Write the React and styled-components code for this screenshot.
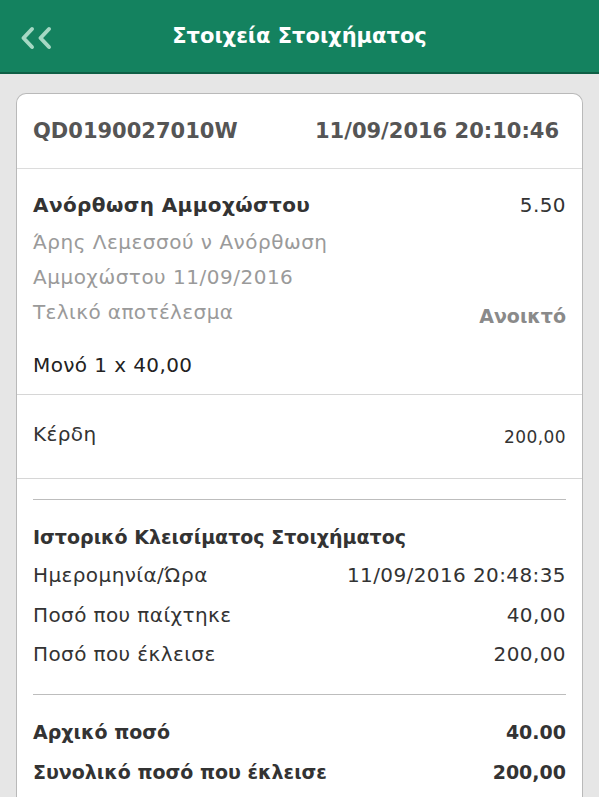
import React from "react";
import styled, { createGlobalStyle } from "styled-components";

const GlobalStyle = createGlobalStyle`
  body {
    margin: 0;
    background: #e6e6e6;
    font-family: "DejaVu Sans", Roboto, "Noto Sans", sans-serif;
  }
`;

const Page = styled.div`
  min-height: 797px;
  background: #e6e6e6;
  overflow: hidden;
`;

const TopBar = styled.header`
  height: 72px;
  background: #14825f;
  border-bottom: 2px solid #0e5f45;
  display: flex;
  align-items: center;
  position: relative;
  justify-content: center;
`;

const BackButton = styled.button`
  position: absolute;
  left: 20px;
  top: 26px;
  width: 32px;
  height: 24px;
  padding: 0;
  border: none;
  background: transparent;
  display: flex;
`;

const Title = styled.h1`
  margin: 0;
  color: #fff;
  font-size: 21px;
  font-weight: 700;
`;

const Card = styled.section`
  margin: 19px 16px 0;
  background: #fff;
  border: 1px solid #b9b9b9;
  border-bottom: none;
  border-radius: 10px 10px 0 0;
`;

const TicketRow = styled.div`
  height: 74px;
  display: flex;
  align-items: center;
  justify-content: space-between;
  padding: 0 23px 0 16px;
  font-size: 21px;
  font-weight: 700;
  color: #555;
  border-bottom: 1px solid #dcdcdc;
`;

const Section = styled.div`
  padding: ${(p) => p.$pad};
  border-bottom: ${(p) => (p.$line ? "1px solid #d6d6d6" : "none")};
`;

const Row = styled.div`
  display: flex;
  justify-content: space-between;
  align-items: ${(p) => p.$align || "center"};
  line-height: ${(p) => p.$lh || 36}px;
  margin-top: ${(p) => p.$mt || 0}px;
  font-size: ${(p) => p.$size || 20}px;
  letter-spacing: ${(p) => (p.$size === 19 ? 0 : 0.4)}px;
  font-weight: ${(p) => (p.$bold ? 700 : 400)};
  color: ${(p) => p.$color || "#333"};
`;

/* right-hand value; $drop pushes it a few px below the row's centre */
const Value = styled.span`
  font-size: ${(p) => p.$size || 20}px;
  font-weight: ${(p) => (p.$bold ? 700 : 400)};
  color: ${(p) => p.$color || "inherit"};
  letter-spacing: ${(p) => (p.$bold ? 0 : 0.4)}px;
  padding-top: ${(p) => (p.$drop || 0) * 2}px;
  line-height: ${(p) => (p.$lh || 36) - (p.$drop || 0) * 2}px;
`;

const Muted = styled.div`
  margin-top: 2px;
  font-size: 20px;
  letter-spacing: 0.5px;
  line-height: 35px;
  color: #9a9a9a;
`;

const Divider = styled.hr`
  margin: ${(p) => p.$m};
  border: none;
  border-top: 1px solid #bdbdbd;
`;

function ChevronsLeft() {
  return (
    <svg width="32" height="24" viewBox="0 0 32 24" fill="none">
      <path
        d="M12 3 L3.5 12 L12 21 M29 3 L20.5 12 L29 21"
        stroke="#a6d8c4"
        strokeWidth="4"
        strokeLinecap="round"
        strokeLinejoin="round"
      />
    </svg>
  );
}

export default function App() {
  return (
    <Page>
      <GlobalStyle />
      <TopBar>
        <BackButton aria-label="Πίσω">
          <ChevronsLeft />
        </BackButton>
        <Title>Στοιχεία Στοιχήματος</Title>
      </TopBar>
      <Card>
        <TicketRow>
          <span>QD0190027010W</span>
          <span>11/09/2016 20:10:46</span>
        </TicketRow>

        <Section $pad="18px 16px 11px" $line>
          <Row $bold>
            <span>Ανόρθωση Αμμοχώστου</span>
            <Value>5.50</Value>
          </Row>
          <Muted>
            Άρης Λεμεσσού ν Ανόρθωση
            <br />
            Αμμοχώστου 11/09/2016
          </Muted>
          <Row $color="#9a9a9a" $align="flex-start" $lh={35}>
            <span>Τελικό αποτέλεσμα</span>
            <Value $bold $size={19} $color="#8a8a8a" $lh={35} $drop={4}>
              Ανοικτό
            </Value>
          </Row>
          <Row $mt={17} $color="#222">
            <span>Μονό 1 x 40,00</span>
          </Row>
        </Section>

        <Section $pad="21px 16px 26px" $line>
          <Row $color="#333" $align="flex-start">
            <span>Κέρδη</span>
            <Value $size={17} $drop={3}>
              200,00
            </Value>
          </Row>
        </Section>

        <Section $pad="20px 16px 20px">
          <Divider $m="0" />
          <Row $bold $size={19} $mt={18} $lh={38}>
            <span>Ιστορικό Κλεισίματος Στοιχήματος</span>
          </Row>
          <Row $lh={39.5}>
            <span>Ημερομηνία/Ώρα</span>
            <span>11/09/2016 20:48:35</span>
          </Row>
          <Row $lh={39.5}>
            <span>Ποσό που παίχτηκε</span>
            <span>40,00</span>
          </Row>
          <Row $lh={39.5}>
            <span>Ποσό που έκλεισε</span>
            <span>200,00</span>
          </Row>
          <Divider $m="19px 0 0" />
          <Row $bold $size={19} $mt={17} $lh={40}>
            <span>Αρχικό ποσό</span>
            <span>40.00</span>
          </Row>
          <Row $bold $size={19} $lh={40}>
            <span>Συνολικό ποσό που έκλεισε</span>
            <span>200,00</span>
          </Row>
        </Section>
      </Card>
    </Page>
  );
}
